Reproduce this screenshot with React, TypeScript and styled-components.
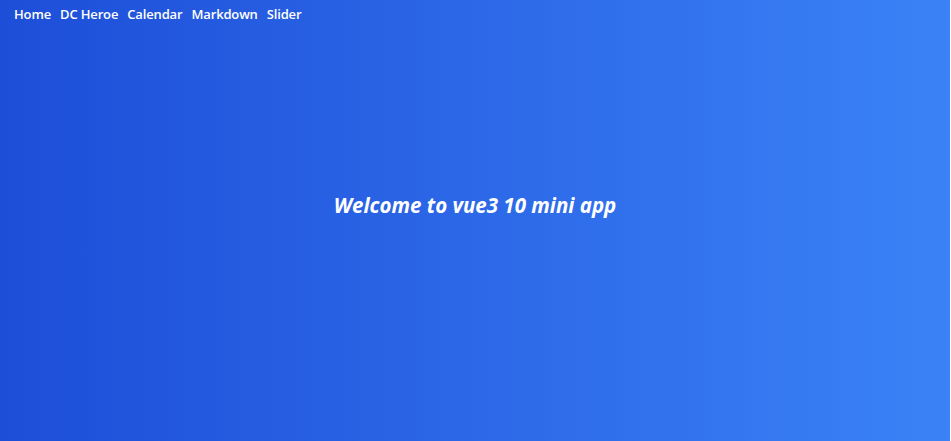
import React from "react";
import styled, { createGlobalStyle } from "styled-components";

const Global = createGlobalStyle`
  html, body { margin: 0; padding: 0; background: #ffffff; }
  body { font-family: "Open Sans", "Noto Sans", sans-serif; }
`;

const Page = styled.div`
  width: 950px;
  height: 441px;
  background: linear-gradient(to right, #1d4ed8, #3b82f6);
  color: #ffffff;
  display: flex;
  flex-direction: column;
`;

const Nav = styled.nav`
  display: flex;
  gap: 9px;
  padding: 3px 14px 0;
  height: 21px;
  align-items: center;
`;

const NavLink = styled.a`
  color: #ffffff;
  text-decoration: none;
  font-size: 13px;
  font-weight: 600;
  letter-spacing: -0.15px;
`;

const Main = styled.main`
  flex: 1;
  display: flex;
  justify-content: center;
  padding-top: 167px;
`;

const Title = styled.h1`
  margin: 0;
  font-size: 20.5px;
  font-weight: 700;
  font-style: italic;
  line-height: 28px;
`;

export default function App() {
  const links = ["Home", "DC Heroe", "Calendar", "Markdown", "Slider"];
  return (
    <>
      <Global />
      <Page>
        <Nav>
          {links.map((l) => (
            <NavLink key={l} href="#">
              {l}
            </NavLink>
          ))}
        </Nav>
        <Main>
          <Title>Welcome to vue3 10 mini app</Title>
        </Main>
      </Page>
    </>
  );
}
